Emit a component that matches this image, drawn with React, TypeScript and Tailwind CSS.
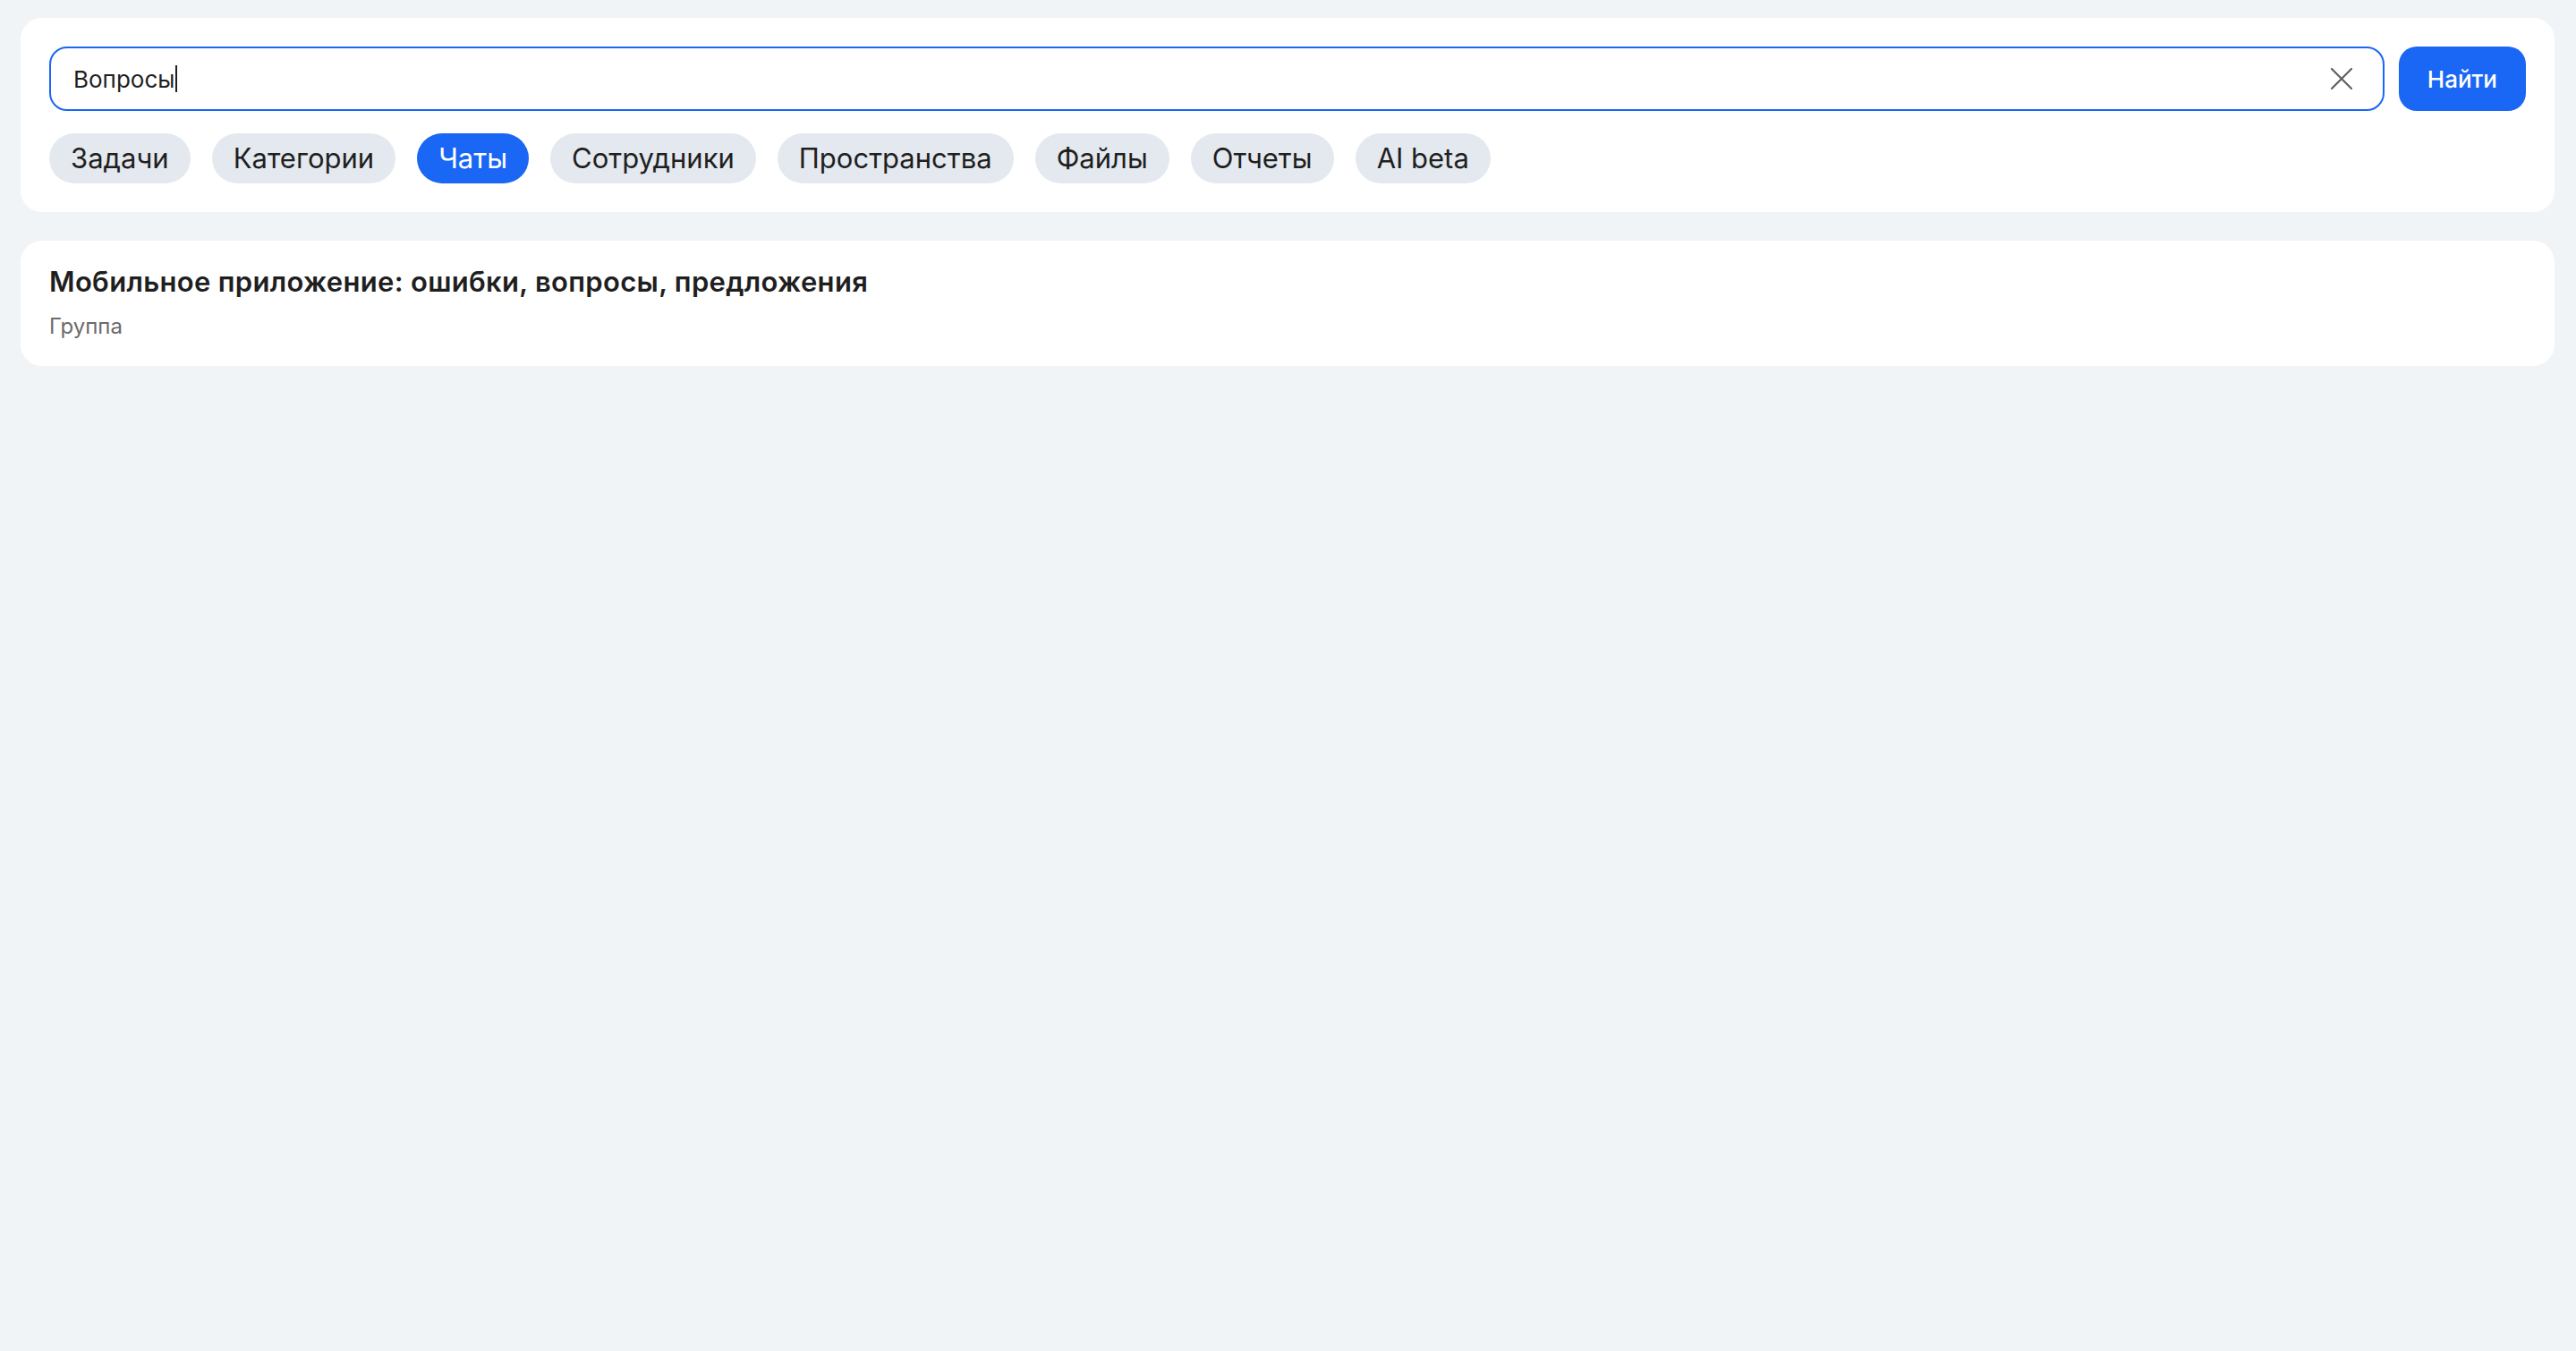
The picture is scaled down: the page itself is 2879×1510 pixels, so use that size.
const tabs = ["Задачи", "Категории", "Чаты", "Сотрудники", "Пространства", "Файлы", "Отчеты", "AI beta"];

export default function App() {
  const active = "Чаты";

  return (
    <main
      className="min-h-screen bg-[#f0f4f7] pl-[23px] pr-6 pt-5"
      style={{ fontFamily: "Inter, 'Noto Sans', sans-serif" }}
    >
      {/* Search panel */}
      <section className="rounded-3xl bg-white p-8">
        <div className="flex items-center gap-4">
          <div className="flex h-[72px] flex-1 items-center rounded-[20px] border-2 border-[#1a66f5] pl-[25px] pr-[34px]">
            <div className="flex flex-1 items-center text-[26px] text-[#1f1f1f]">
              <span>Вопросы</span>
              <span className="ml-px h-[30px] w-[2px] bg-[#1f1f1f]" />
            </div>
            <button className="flex h-6 w-6 items-center justify-center">
              <svg width="24" height="24" viewBox="0 0 24 24" fill="none">
                <path d="M1 1L23 23M23 1L1 23" stroke="#5f5f5f" strokeWidth="2.2" strokeLinecap="round" />
              </svg>
            </button>
          </div>
          <button className="h-[72px] rounded-[20px] bg-[#1a66f5] px-8 text-[26px] font-medium text-white">
            Найти
          </button>
        </div>

        <div className="mt-[25px] flex flex-wrap gap-6">
          {tabs.map((t) => (
            <button
              key={t}
              className={
                t === active
                  ? "h-14 rounded-full bg-[#1a66f5] px-6 text-[31px] text-white"
                  : "h-14 rounded-full bg-[#e4e9f0] px-6 text-[31px] text-[#1f1f1f]"
              }
            >
              {t}
            </button>
          ))}
        </div>
      </section>

      {/* Results */}
      <section className="mt-8 rounded-3xl bg-white px-8 pb-7 pt-7">
        <h2 className="text-[31px] font-semibold leading-9 tracking-[0.01em] text-[#1f1f1f]">
          Мобильное приложение: ошибки, вопросы, предложения
        </h2>
        <p className="mt-4 text-2xl leading-8 text-[#6b6b6b]">Группа</p>
      </section>
    </main>
  );
}
